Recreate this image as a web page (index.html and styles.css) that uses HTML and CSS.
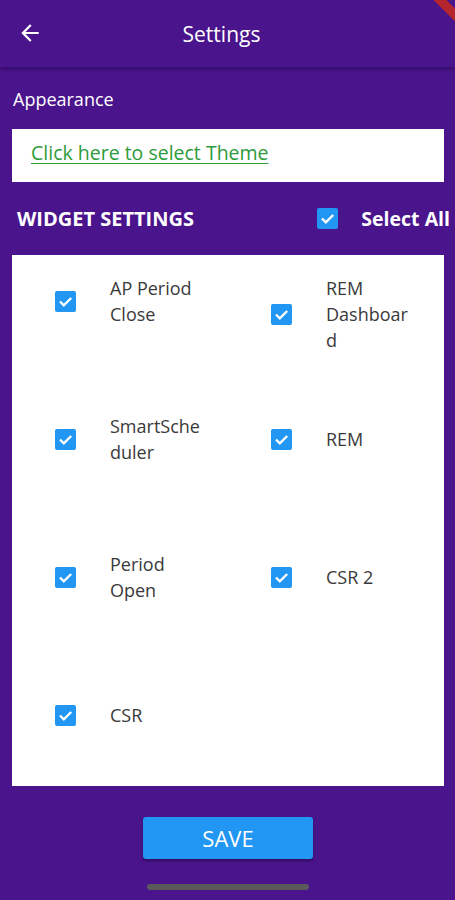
FILE: index.html
```html
<!DOCTYPE html>
<html lang="en">
<head>
    <meta charset="UTF-8">
    <meta name="viewport" content="width=device-width, initial-scale=1.0">
    <title>Settings</title>
    <link rel="stylesheet" href="styles.css">
</head>
<body>
    <div class="screen">
        <div class="debug-banner"></div>

        <header class="app-bar">
            <span class="back">
                <svg width="26" height="26" viewBox="0 0 24 24">
                    <path d="M20 11H7.83l5.59-5.59L12 4l-8 8 8 8 1.41-1.41L7.83 13H20v-2z" fill="#fff"/>
                </svg>
            </span>
            <h1>Settings</h1>
        </header>

        <main class="content">
            <div class="section-label">Appearance</div>
            <div class="theme-box">
                <a href="#" class="theme-link">Click here to select Theme</a>
            </div>

            <div class="widget-head">
                <span class="widget-title">WIDGET SETTINGS</span>
                <label class="select-all">
                    <span class="check"></span>
                    <span>Select All</span>
                </label>
            </div>

            <div class="widget-panel">
                <div class="cell"><div class="widget"><span class="check"></span><span class="widget-name">AP Period Close</span></div></div>
                <div class="cell"><div class="widget"><span class="check"></span><span class="widget-name">REM Dashboard</span></div></div>
                <div class="cell"><div class="widget"><span class="check"></span><span class="widget-name">SmartScheduler</span></div></div>
                <div class="cell"><div class="widget"><span class="check"></span><span class="widget-name">REM</span></div></div>
                <div class="cell"><div class="widget"><span class="check"></span><span class="widget-name">Period Open</span></div></div>
                <div class="cell"><div class="widget"><span class="check"></span><span class="widget-name">CSR 2</span></div></div>
                <div class="cell"><div class="widget"><span class="check"></span><span class="widget-name">CSR</span></div></div>
            </div>

            <div class="actions">
                <button class="save-btn">SAVE</button>
            </div>
        </main>

        <div class="home-bar"></div>
    </div>
</body>
</html>
```

FILE: styles.css
```css
:root {
    --purple: #4a148c;
    --blue: #2196f3;
    --text: #3a3a3a;
}

* {
    box-sizing: border-box;
    margin: 0;
    padding: 0;
}

body {
    font-family: "Open Sans", "Noto Sans", sans-serif;
    background-color: var(--purple);
    width: 455px;
    height: 900px;
    overflow: hidden;
}

.screen {
    position: relative;
    height: 900px;
    overflow: hidden;
    background-color: var(--purple);
}

/* corner ribbon, clipped inside the frame */
.debug-banner {
    position: absolute;
    top: 0;
    right: 0;
    width: 26px;
    height: 26px;
    background: linear-gradient(45deg, transparent 58%, #b3262e 58%, #b3262e 84%, transparent 84%);
}

.app-bar {
    height: 67px;
    display: flex;
    align-items: center;
    justify-content: center;
    position: relative;
    padding-right: 12px;
    box-shadow: 0 2px 4px rgba(20, 0, 50, 0.45);
}

.back {
    position: absolute;
    left: 17px;
    top: 20px;
    display: flex;
}

.app-bar h1 {
    color: #fff;
    font-size: 21px;
    font-weight: 400;
    margin-top: 1px;
}

.content {
    padding: 20px 11px 0 12px;
}

.section-label {
    color: #fff;
    font-size: 18px;
    line-height: 24px;
    padding-left: 1px;
}

.theme-box {
    margin-top: 18px;
    height: 53px;
    background-color: #fff;
    display: flex;
    align-items: center;
    padding-left: 19px;
    padding-bottom: 6px;
}

.theme-link {
    color: #2e9b3a;
    font-size: 19.5px;
    text-decoration: underline;
    text-decoration-thickness: 1px;
    text-underline-offset: 3px;
}

.widget-head {
    display: flex;
    align-items: center;
    justify-content: space-between;
    height: 72px;
    padding-left: 5px;
    margin-right: -6px;
}

.widget-title {
    color: #fff;
    font-size: 20px;
    font-weight: 700;
}

.select-all {
    display: flex;
    align-items: center;
    gap: 23px;
    color: #fff;
    font-size: 19.5px;
    font-weight: 700;
}

.check {
    width: 21px;
    height: 21px;
    flex-shrink: 0;
    border-radius: 2px;
    background-color: var(--blue);
    background-image: url("data:image/svg+xml,%3Csvg xmlns='http://www.w3.org/2000/svg' viewBox='0 0 21 21'%3E%3Cpath d='M5 10.5l3.8 3.8L16.2 7' fill='none' stroke='white' stroke-width='2.4'/%3E%3C/svg%3E");
}

.widget-panel {
    background-color: #fff;
    height: 531px;
    margin-top: 1px;
    display: grid;
    grid-template-columns: 216px 216px;
    grid-auto-rows: 52px;
    row-gap: 86px;
    padding-top: 20px;
}

.cell {
    display: flex;
    align-items: safe center;
    padding-left: 43px;
}

.widget {
    display: flex;
    align-items: center;
    gap: 34px;
}

.widget-name {
    width: 92px;
    color: var(--text);
    font-size: 18px;
    line-height: 26px;
    overflow-wrap: anywhere;
}

.actions {
    display: flex;
    margin-top: 31px;
    padding-left: 131px;
}

.save-btn {
    width: 170px;
    height: 42px;
    border: none;
    border-radius: 3px;
    background-color: var(--blue);
    color: #fff;
    font-family: inherit;
    font-size: 22px;
    box-shadow: 0 2px 3px rgba(0, 0, 0, 0.35);
}

.home-bar {
    position: absolute;
    left: 147px;
    top: 884px;
    width: 162px;
    height: 6px;
    border-radius: 3px;
    background-color: #5a5a5a;
}
```
